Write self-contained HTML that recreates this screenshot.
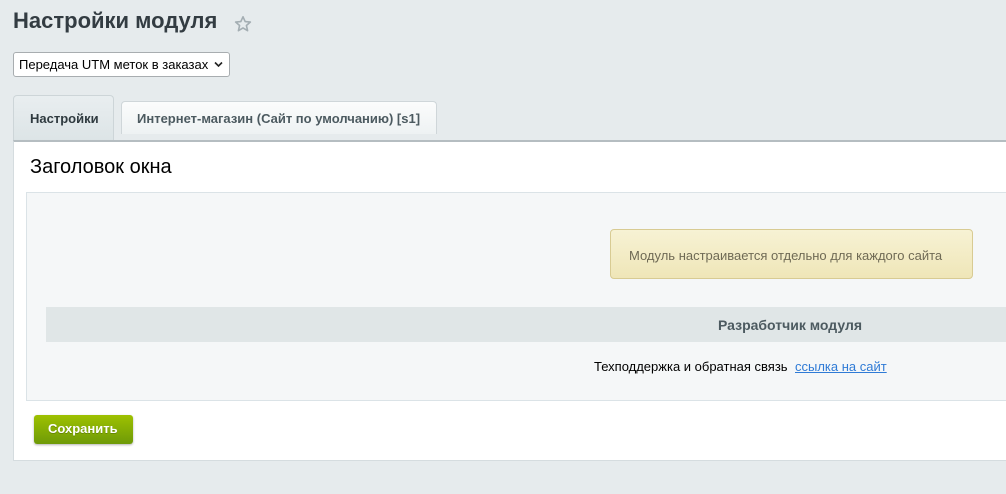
<!DOCTYPE html>
<html><head><meta charset="utf-8"><style>
*{margin:0;padding:0;box-sizing:border-box}
body{width:1006px;height:494px;overflow:hidden;background:#e6ebed;font-family:"Liberation Sans",Arial,sans-serif;position:relative}
.a{position:absolute}
</style></head><body>
<div class="a" style="left:13px;top:8px;font-size:22px;font-weight:bold;color:#333c42;">Настройки модуля</div>
<svg class="a" style="left:234px;top:15px" width="18" height="18" viewBox="0 0 20 19"><path d="M10 1.5l2.4 5.3 5.8.5-4.4 3.9 1.3 5.7L10 13.9l-5.1 3 1.3-5.7L1.8 7.3l5.8-.5z" fill="none" stroke="#a4aeb3" stroke-width="1.8" stroke-linejoin="round"/></svg>
<div class="a" style="left:13px;top:52px;width:217px;height:25px;background:#fff;border:1px solid #a8adb0;border-radius:3px;font-size:13px;color:#000;padding:4px 0 0 5px;">Передача UTM меток в заказах</div>
<svg class="a" style="left:214px;top:61px" width="9" height="7" viewBox="0 0 9 7"><path d="M1 1.5l3.5 3.5 3.5-3.5" fill="none" stroke="#222" stroke-width="1.6"/></svg>
<div class="a" style="left:13px;top:95px;width:101px;height:47px;background:linear-gradient(#e9eef0,#dce4e6);border:1px solid #cdd5d8;border-bottom:none;border-radius:4px 4px 0 0;font-size:13px;font-weight:bold;color:#2f3a3f;padding:15px 0 0 16px;">Настройки</div>
<div class="a" style="left:121px;top:101px;width:316px;height:33px;background:linear-gradient(#fbfcfc,#eef2f3);border:1px solid #cfd6d9;border-bottom:none;border-radius:4px 4px 0 0;font-size:13px;font-weight:bold;color:#4c5a60;padding:9px 0 0 15px;">Интернет-магазин (Сайт по умолчанию) [s1]</div>
<div class="a" style="left:13px;top:140px;width:1000px;height:321px;background:#fff;border:1px solid #d5dcdf;border-top:2px solid #b5bdc1;"></div>
<div class="a" style="left:30px;top:156px;font-size:20px;color:#000;">Заголовок окна</div>
<div class="a" style="left:26px;top:192px;width:990px;height:209px;background:#f5f7f8;border:1px solid #dbe3e7;"></div>
<div class="a" style="left:610px;top:229px;width:363px;height:50px;background:linear-gradient(#f7f2d4,#efe6b8);border:1px solid #d8cb93;border-radius:4px;font-size:13px;color:#6f6a55;padding:18px 0 0 18px;">Модуль настраивается отдельно для каждого сайта</div>
<div class="a" style="left:46px;top:307px;width:970px;height:35px;background:#e0e6e7;"></div>
<div class="a" style="left:718px;top:317px;font-size:14px;font-weight:bold;color:#4c5a60;">Разработчик модуля</div>
<div class="a" style="left:594px;top:359px;font-size:13px;color:#000;">Техподдержка и обратная связь</div>
<div class="a" style="left:795px;top:359px;font-size:13px;color:#2f7bd6;text-decoration:underline;">ссылка на сайт</div>
<div class="a" style="left:34px;top:415px;width:99px;height:29px;background:linear-gradient(#9ec100,#6e9a08);border-radius:3px;box-shadow:0 1px 2px rgba(0,0,0,.3);font-size:13px;font-weight:bold;color:#fff;padding:6px 0 0 14px;text-shadow:0 1px 0 rgba(0,0,0,.2);">Сохранить</div>
</body></html>
